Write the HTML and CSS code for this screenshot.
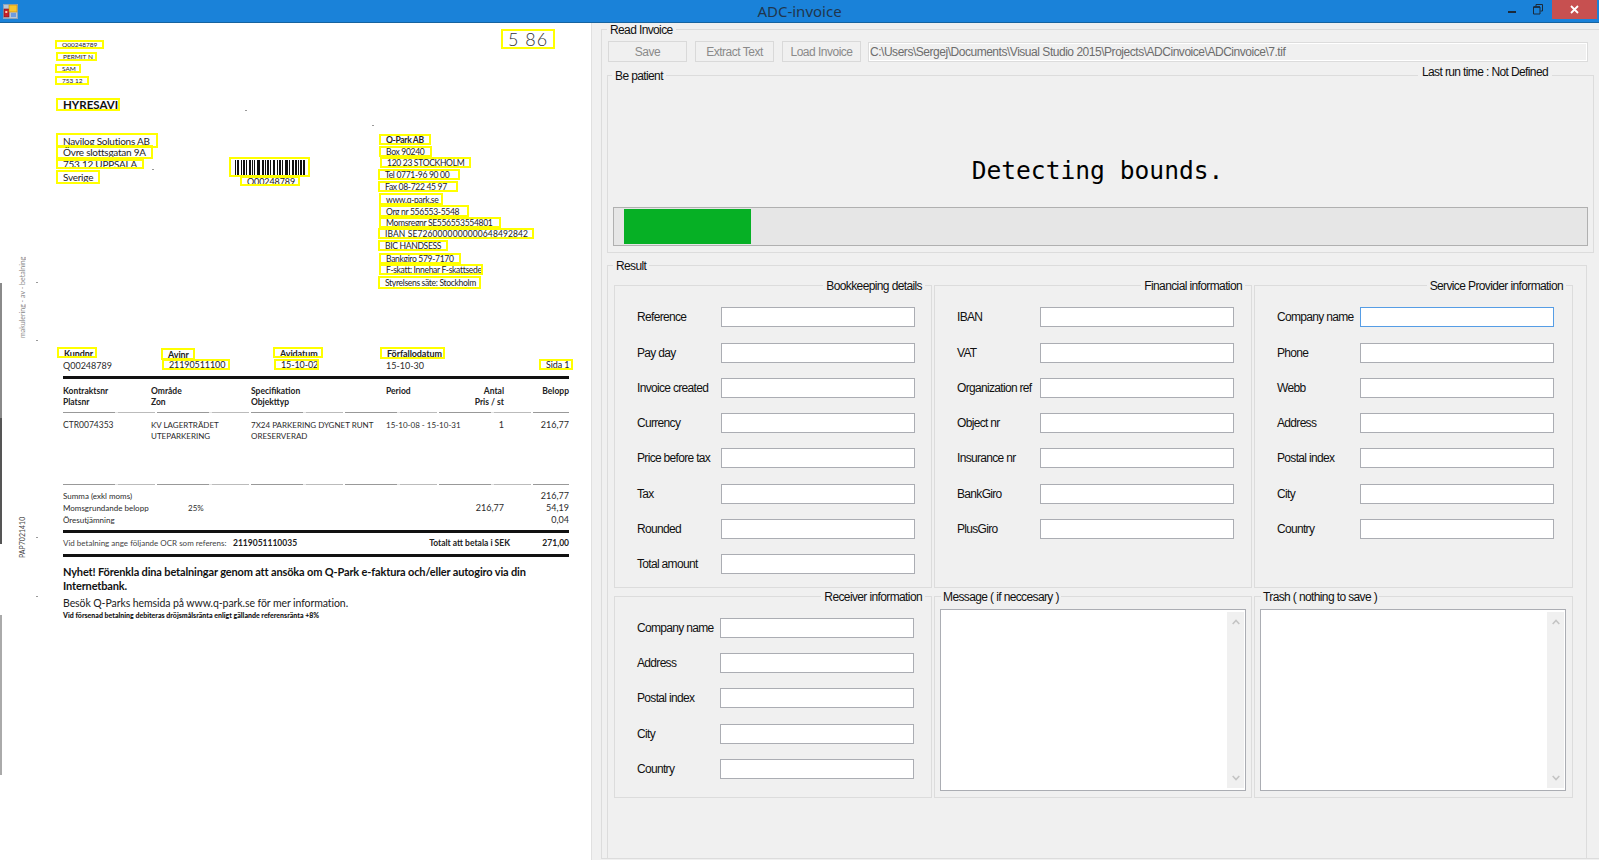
FILE: index.html
```html
<!DOCTYPE html>
<html lang="en">
<head>
<meta charset="utf-8">
<title>ADC-invoice</title>
<link rel="stylesheet" href="styles.css">
</head>
<body>
<div class="window">
  <header class="titlebar">
    <svg class="app-icon" width="15" height="15" viewBox="0 0 15 15">
      <rect x="0.5" y="0.5" width="14" height="14" fill="#b8c6d6" stroke="#8fa3b8"/>
      <rect x="1" y="5" width="5" height="8" fill="#c8202a" stroke="#7c1418" stroke-width="0.6"/>
      <rect x="2.3" y="7" width="2" height="2" fill="#f4d0b0"/>
      <rect x="6" y="1" width="8" height="7" fill="#f7c530" stroke="#c48a10" stroke-width="0.6"/>
      <rect x="8" y="9" width="5" height="4" fill="#6d9be0"/>
    </svg>
    <div class="title">ADC-invoice</div>
    <div class="win-buttons">
      <span class="btn-min"></span>
      <svg class="btn-restore" width="10" height="11" viewBox="0 0 10 11"><path d="M3 2.5V.5H9.5V7H7.5M.5 3H7V10H.5Z" fill="none" stroke="#1b2a3a" stroke-width="1"/><path d="M.5 3H7" stroke="#1b2a3a" stroke-width="1.6"/></svg>
      <div class="btn-close"><svg width="9" height="9" viewBox="0 0 9 9"><path d="M1 1L8 8M8 1L1 8" stroke="#fff" stroke-width="1.8"/></svg></div>
    </div>
  </header>

  <div class="main">
    <section class="doc">
      <span class="edge e1"></span><span class="edge e2"></span><span class="edge e3"></span>
      <span class="speck s1"></span><span class="speck s2"></span><span class="speck s3"></span><span class="speck s4"></span><span class="speck s5"></span><span class="speck s6"></span><span class="speck s7"></span>
      <span class="t margin m1">makulering - av - betalning</span>
      <span class="t margin m2">PAP7021410</span>

      <div class="box hand b-hand"><span>5 86</span></div>

      <div class="box tiny b1"><span>Q00248789</span></div>
      <div class="box tiny b2"><span>PERMIT N</span></div>
      <div class="box tiny b3"><span>SAM</span></div>
      <div class="box tiny b4"><span>753 12</span></div>
      <div class="box title-box b5"><span>HYRESAVI</span></div>
      <div class="box addr b6"><span>Navilog Solutions AB</span></div>
      <div class="box addr b7"><span>Övre slottsgatan 9A</span></div>
      <div class="box addr b8"><span>753 12 UPPSALA</span></div>
      <div class="box addr b9"><span>Sverige</span></div>

      <div class="box b-bar">
        <svg width="70" height="15" viewBox="0 0 70 15"><path fill="none" stroke="#111" stroke-width="1" d="M.5 0V15M2.5 0V15M3.5 0V15M6.5 0V15M8.5 0V15M9.5 0V15M11.5 0V15M14.5 0V15M15.5 0V15M17.5 0V15M19.5 0V15M22.5 0V15M23.5 0V15M24.5 0V15M27.5 0V15M28.5 0V15M30.5 0V15M32.5 0V15M33.5 0V15M35.5 0V15M38.5 0V15M39.5 0V15M42.5 0V15M44.5 0V15M45.5 0V15M47.5 0V15M50.5 0V15M51.5 0V15M52.5 0V15M54.5 0V15M57.5 0V15M58.5 0V15M60.5 0V15M61.5 0V15M63.5 0V15M65.5 0V15M66.5 0V15M68.5 0V15M69.5 0V15"/></svg>
      </div>
      <div class="box small b-barcode"><span>Q00248789</span></div>

      <div class="box small line bold c1"><span>Q-Park AB</span></div>
      <div class="box small line c2"><span>Box 90240</span></div>
      <div class="box small line c3"><span>120 23 STOCKHOLM</span></div>
      <div class="box small line c4"><span>Tel 0771-96 90 00</span></div>
      <div class="box small line c5"><span>Fax 08-722 45 97</span></div>
      <div class="box small line c6"><span>www.q-park.se</span></div>
      <div class="box small line c7"><span>Org nr 556553-5548</span></div>
      <div class="box small line c8"><span>Momsregnr SE556553554801</span></div>
      <div class="box small line c9"><span>IBAN SE7260000000000648492842</span></div>
      <div class="box small line c10"><span>BIC HANDSESS</span></div>
      <div class="box small line c11"><span>Bankgiro 579-7170</span></div>
      <div class="box small line c12"><span>F-skatt: Innehar F-skattsedel</span></div>
      <div class="box small line c13"><span>Styrelsens säte: Stockholm</span></div>

      <div class="box small bold low d1"><span>Kundnr</span></div>
      <div class="box small bold low d2"><span>Avinr</span></div>
      <div class="box small d3"><span>21190511100</span></div>
      <div class="box small bold low d4"><span>Avidatum</span></div>
      <div class="box small d5"><span>15-10-02</span></div>
      <div class="box small bold low d6"><span>Förfallodatum</span></div>
      <div class="box small d7"><span>Sida 1</span></div>

      <span class="t num x63 y366">Q00248789</span>
      <span class="t num x386 y366">15-10-30</span>
      <span class="rule thick r377"></span>

      <span class="t strong x63 y391">Kontraktsnr</span>
      <span class="t strong x63 y402">Platsnr</span>
      <span class="t strong x151 y391">Område</span>
      <span class="t strong x151 y402">Zon</span>
      <span class="t strong x251 y391">Specifikation</span>
      <span class="t strong x251 y402">Objekttyp</span>
      <span class="t strong x386 y391">Period</span>
      <span class="t strong rq y391">Antal</span>
      <span class="t strong rq y402">Pris / st</span>
      <span class="t strong ra y391">Belopp</span>
      <span class="rule thin r412"></span>

      <span class="t x63 y425">CTR0074353</span>
      <span class="t nar x151 y425">KV LAGERTRÄDET</span>
      <span class="t nar x151 y436">UTEPARKERING</span>
      <span class="t nar x251 y425">7X24 PARKERING DYGNET RUNT</span>
      <span class="t nar x251 y436">ORESERVERAD</span>
      <span class="t nar x386 y425">15-10-08 - 15-10-31</span>
      <span class="t num rq y425">1</span>
      <span class="t num ra y425">216,77</span>
      <span class="rule thin r484"></span>

      <span class="t nar x63 y496">Summa (exkl moms)</span>
      <span class="t num ra y496">216,77</span>
      <span class="t nar x63 y508">Momsgrundande belopp</span>
      <span class="t nar x188 y508">25%</span>
      <span class="t num rq y508">216,77</span>
      <span class="t num ra y508">54,19</span>
      <span class="t nar x63 y520">Öresutjämning</span>
      <span class="t num ra y520">0,04</span>
      <span class="rule thick r531"></span>

      <span class="t fine x63 y543">Vid betalning ange följande OCR som referens:</span>
      <span class="t strong x233 y543">2119051110035</span>
      <span class="t strong rt y543">Totalt att betala i SEK</span>
      <span class="t strong ra y543">271,00</span>
      <span class="rule thick r555"></span>

      <span class="t news x63 y572">Nyhet! Förenkla dina betalningar genom att ansöka om Q-Park e-faktura och/eller autogiro via din</span>
      <span class="t news x63 y586">Internetbank.</span>
      <span class="t visit x63 y603">Besök Q-Parks hemsida på www.q-park.se för mer information.</span>
      <span class="t late x63 y615">Vid försenad betalning debiteras dröjsmålsränta enligt gällande referensränta +8%</span>
    </section>

    <section class="panel">
      <div class="group read">
        <div class="head"><span>Read Invoice</span></div>
        <div class="toolbar">
          <button class="cmd" disabled>Save</button>
          <button class="cmd" disabled>Extract Text</button>
          <button class="cmd" disabled>Load Invoice</button>
          <input class="path" readonly value="C:\Users\Sergej\Documents\Visual Studio 2015\Projects\ADCinvoice\ADCinvoice\7.tif">
        </div>

        <div class="group patient">
          <div class="head split"><span>Be patient</span><span class="runtime">Last run time : Not Defined</span></div>
          <div class="status">Detecting bounds.</div>
          <div class="progress"><div class="bar"></div></div>
        </div>

        <div class="group result">
          <div class="head"><span>Result</span></div>
          <div class="cols top">
            <div class="group sub">
              <div class="head end"><span>Bookkeeping details</span></div>
              <div class="rows wide">
                <label class="row"><span class="lbl">Reference</span><input></label>
                <label class="row"><span class="lbl">Pay day</span><input></label>
                <label class="row"><span class="lbl">Invoice created</span><input></label>
                <label class="row"><span class="lbl">Currency</span><input></label>
                <label class="row"><span class="lbl">Price before tax</span><input></label>
                <label class="row"><span class="lbl">Tax</span><input></label>
                <label class="row"><span class="lbl">Rounded</span><input></label>
                <label class="row"><span class="lbl">Total amount</span><input></label>
              </div>
            </div>
            <div class="group sub">
              <div class="head end"><span>Financial information</span></div>
              <div class="rows">
                <label class="row"><span class="lbl">IBAN</span><input></label>
                <label class="row"><span class="lbl">VAT</span><input></label>
                <label class="row"><span class="lbl">Organization ref</span><input></label>
                <label class="row"><span class="lbl">Object nr</span><input></label>
                <label class="row"><span class="lbl">Insurance nr</span><input></label>
                <label class="row"><span class="lbl">BankGiro</span><input></label>
                <label class="row"><span class="lbl">PlusGiro</span><input></label>
              </div>
            </div>
            <div class="group sub">
              <div class="head end"><span>Service Provider information</span></div>
              <div class="rows">
                <label class="row"><span class="lbl">Company name</span><input class="focused"></label>
                <label class="row"><span class="lbl">Phone</span><input></label>
                <label class="row"><span class="lbl">Webb</span><input></label>
                <label class="row"><span class="lbl">Address</span><input></label>
                <label class="row"><span class="lbl">Postal index</span><input></label>
                <label class="row"><span class="lbl">City</span><input></label>
                <label class="row"><span class="lbl">Country</span><input></label>
              </div>
            </div>
          </div>
          <div class="cols bottom">
            <div class="group sub">
              <div class="head end"><span>Receiver information</span></div>
              <div class="rows tight">
                <label class="row"><span class="lbl">Company name</span><input></label>
                <label class="row"><span class="lbl">Address</span><input></label>
                <label class="row"><span class="lbl">Postal index</span><input></label>
                <label class="row"><span class="lbl">City</span><input></label>
                <label class="row"><span class="lbl">Country</span><input></label>
              </div>
            </div>
            <div class="group sub">
              <div class="head start"><span>Message ( if neccesary )</span></div>
              <div class="memo">
                <div class="memo-text"></div>
                <div class="scroll">
                  <svg width="8" height="6" viewBox="0 0 8 6"><path d="M.7 5L4 1.5 7.3 5" fill="none" stroke="#c4c4c4" stroke-width="1.6"/></svg>
                  <svg width="8" height="6" viewBox="0 0 8 6"><path d="M.7 1L4 4.5 7.3 1" fill="none" stroke="#c4c4c4" stroke-width="1.6"/></svg>
                </div>
              </div>
            </div>
            <div class="group sub">
              <div class="head start"><span>Trash ( nothing to save )</span></div>
              <div class="memo">
                <div class="memo-text"></div>
                <div class="scroll">
                  <svg width="8" height="6" viewBox="0 0 8 6"><path d="M.7 5L4 1.5 7.3 5" fill="none" stroke="#c4c4c4" stroke-width="1.6"/></svg>
                  <svg width="8" height="6" viewBox="0 0 8 6"><path d="M.7 1L4 4.5 7.3 1" fill="none" stroke="#c4c4c4" stroke-width="1.6"/></svg>
                </div>
              </div>
            </div>
          </div>
        </div>
      </div>
    </section>
  </div>
</div>
</body>
</html>
```

FILE: styles.css
```css
* { box-sizing: border-box; }
html, body { margin: 0; padding: 0; }
body { font-family: "Liberation Sans", Arial, sans-serif; font-size: 12px; letter-spacing: -0.5px; color: #111; background: #f0f0f0; }

.window { position: relative; width: 1599px; height: 860px; overflow: hidden; display: flex; flex-direction: column; }

/* Title bar */
.titlebar { flex: none; height: 23px; background: #1a82d9; border-bottom: 1px solid #16639f; display: grid; grid-template-columns: 1fr auto 1fr; align-items: start; }
.app-icon { margin: 4px 0 0 3px; }
.title { font-family: "Noto Sans", sans-serif; font-size: 15px; line-height: 22px; letter-spacing: 0; color: #20364d; }
.win-buttons { display: flex; justify-content: flex-end; align-items: flex-start; padding-right: 2px; }
.btn-min { width: 8px; height: 2px; margin: 11px 17px 0 0; background: #1b2a3a; }
.btn-restore { margin: 4px 9px 0 0; }
.btn-close { width: 45px; height: 19px; background: #c75050; display: flex; align-items: center; justify-content: center; }

.main { flex: 1; display: flex; min-height: 0; }

/* Scanned invoice canvas: coordinates relative to .window */
.doc { flex: none; width: 591px; background: #fff; }
.t { position: absolute; white-space: nowrap; font-family: Lato, sans-serif; font-size: 8.5px; line-height: 12px; letter-spacing: 0; color: #2b2b2b; }
.box { position: absolute; border: 2px solid #ffff00; overflow: hidden; white-space: nowrap; font-family: Lato, sans-serif; letter-spacing: 0; color: #222; display: flex; align-items: center; }
.box.tiny { font-size: 6.5px; line-height: 5px; padding-left: 5px; }
.box.title-box { font-size: 11.5px; line-height: 9px; font-weight: 700; padding-left: 5px; color: #111; }
.box.addr { font-size: 10px; line-height: 10px; letter-spacing: -0.25px; padding-left: 5px; }
.box.small { font-size: 9px; line-height: 9px; letter-spacing: -0.1px; padding-left: 5px; }
.box.line { font-size: 8.6px; letter-spacing: -0.35px; padding-top: 2px; }
.box.bold { font-weight: 700; }
.box.low { align-items: flex-start; padding-top: 0; }
.box.hand { font-weight: 300; font-size: 18px; line-height: 16px; letter-spacing: 1px; padding: 0; justify-content: center; color: #333; }
.box.c9 { font-size: 8.5px; letter-spacing: 0.1px; }

.b-hand { left: 501px; top: 29px; width: 54px; height: 20px; }
.b1 { left: 55px; top: 40px; width: 49px; height: 9px; }
.b2 { left: 56px; top: 52px; width: 41px; height: 9px; }
.b3 { left: 55px; top: 64px; width: 26px; height: 9px; }
.b4 { left: 55px; top: 76px; width: 34px; height: 9px; }
.b5 { left: 56px; top: 98px; width: 64px; height: 13px; }
.b6 { left: 56px; top: 133px; width: 102px; height: 15px; }
.b7 { left: 56px; top: 145px; width: 97px; height: 14px; }
.b8 { left: 56px; top: 159px; width: 88px; height: 10px; }
.b9 { left: 56px; top: 170px; width: 44px; height: 14px; }
.b-bar { left: 229px; top: 157px; width: 81px; height: 20px; justify-content: center; }
.b-barcode { left: 240px; top: 176px; width: 60px; height: 10px; }
.c1 { left: 379px; top: 134px; width: 52px; height: 11px; }
.c2 { left: 379px; top: 146px; width: 53px; height: 11px; }
.c3 { left: 380px; top: 157px; width: 91px; height: 11px; }
.c4 { left: 378px; top: 169px; width: 82px; height: 11px; }
.c5 { left: 378px; top: 181px; width: 80px; height: 11px; }
.c6 { left: 379px; top: 193px; width: 64px; height: 12px; }
.c7 { left: 379px; top: 205px; width: 90px; height: 12px; }
.c8 { left: 379px; top: 217px; width: 122px; height: 11px; }
.c9 { left: 378px; top: 228px; width: 156px; height: 11px; }
.c10 { left: 378px; top: 240px; width: 70px; height: 11px; }
.c11 { left: 379px; top: 253px; width: 82px; height: 11px; }
.c12 { left: 379px; top: 264px; width: 104px; height: 11px; }
.c13 { left: 378px; top: 276px; width: 103px; height: 13px; }
.d1 { left: 57px; top: 347px; width: 40px; height: 11px; }
.d2 { left: 161px; top: 348px; width: 34px; height: 12px; }
.d3 { left: 162px; top: 359px; width: 68px; height: 11px; }
.d4 { left: 273px; top: 347px; width: 50px; height: 11px; }
.d5 { left: 274px; top: 359px; width: 45px; height: 11px; }
.d6 { left: 380px; top: 347px; width: 65px; height: 12px; }
.d7 { left: 539px; top: 359px; width: 34px; height: 11px; }

.x63 { left: 63px; } .x151 { left: 151px; } .x188 { left: 188px; } .x233 { left: 233px; } .x251 { left: 251px; } .x386 { left: 386px; }
.rq { right: 1095px; } .ra { right: 1030px; } .rt { right: 1089px; }
.y366 { top: 360px; } .y391 { top: 385px; } .y402 { top: 396px; } .y425 { top: 419px; } .y436 { top: 430px; }
.y496 { top: 490px; } .y508 { top: 502px; } .y520 { top: 514px; } .y543 { top: 537px; }
.y572 { top: 566px; } .y586 { top: 580px; } .y603 { top: 597px; } .y615 { top: 609px; }
.num { font-size: 9px; }
.nar { font-size: 8px; }
.strong { font-weight: 700; font-size: 8.5px; color: #222; }
.fine { font-size: 8px; color: #444; }
.news { font-size: 11px; letter-spacing: -0.15px; font-weight: 700; color: #111; }
.visit { font-size: 10.5px; letter-spacing: -0.08px; color: #222; }
.late { font-size: 7px; font-weight: 900; color: #111; }

.rule { position: absolute; left: 63px; width: 506px; }
.rule.thick { height: 3px; background: #111; }
.rule.thin { height: 1px; background: repeating-linear-gradient(90deg, #999 0 52px, #e4e4e4 52px 55px, #bbb 55px 92px, #fff 92px 94px); }
.r377 { top: 376px; } .r412 { top: 412px; } .r484 { top: 484px; } .r531 { top: 530px; } .r555 { top: 554px; }

.edge { position: absolute; left: 0; width: 2px; background: #8a8a8a; }
.e1 { top: 283px; height: 135px; }
.e2 { top: 418px; height: 126px; background: #555; }
.e3 { top: 615px; height: 160px; background: #aaa; }
.speck { position: absolute; width: 2px; height: 1px; background: #999; }
.s1 { left: 245px; top: 110px; } .s2 { left: 372px; top: 125px; } .s3 { left: 152px; top: 169px; }
.s4 { left: 36px; top: 282px; } .s5 { left: 36px; top: 340px; } .s6 { left: 36px; top: 537px; } .s7 { left: 36px; top: 596px; }
.margin { writing-mode: vertical-rl; transform: rotate(180deg); font-size: 7px; line-height: 8px; left: 18px; color: #444; }
.m1 { top: 258px; height: 80px; color: #888; }
.m2 { top: 517px; height: 41px; }

/* Form panel */
.panel { flex: 1; min-width: 0; background: #f0f0f0; border-left: 1px solid #e0e0e0; padding: 6px 0 0 9px; }
.group { border: 1px solid #dcdcdc; }
.head { height: 14px; margin-top: -7px; line-height: 14px; letter-spacing: -0.62px; display: flex; padding-left: 5px; white-space: nowrap; }
.head span { background: #f0f0f0; padding: 0 3px; }
.head.split { justify-content: space-between; padding-right: 41px; padding-left: 4px; }
.head.end { justify-content: flex-end; padding-right: 6px; }
.head.start { padding-left: 6px; }
.head.start span { padding: 0 2px; }
.head .runtime { margin-top: -4px; height: 14px; padding: 0 4px; }

.read { width: 999px; height: 830px; }
.toolbar { display: flex; align-items: center; height: 21px; margin: 4px 11px 0 6px; }
.cmd { width: 79px; height: 21px; margin: 0 8px 0 0; padding: 0; background: #f0f0f0; border: 1px solid #d9d9d9; font: inherit; letter-spacing: inherit; color: #8a8a8a; }
.cmd:nth-of-type(3) { margin-right: 7px; }
.path { flex: 1; min-width: 0; height: 20px; padding: 0 1px; background: #f0f0f0; border: 1px solid #dcdcdc; box-shadow: inset 0 0 0 1px #fff; outline: none; font: inherit; letter-spacing: -0.47px; color: #6d6d6d; }

.patient { width: 987px; height: 178px; margin: 13px 0 0 5px; }
.status { margin-top: 73px; height: 30px; line-height: 30px; text-align: center; padding-right: 6px; font-family: "DejaVu Sans Mono", monospace; font-size: 24.6px; letter-spacing: 0; color: #000; }
.progress { width: 975px; height: 39px; margin: 21px 0 0 5px; padding: 1px 0 1px 10px; background: #e6e6e6; border: 1px solid #b0b0b0; }
.bar { width: 127px; height: 100%; background: #06b025; }

.result { width: 980px; height: 594px; margin: 12px 0 0 5px; }
.cols { display: grid; grid-template-columns: 318px 318px 319px; gap: 2px; margin-left: 6px; }
.cols.top { height: 303px; margin-top: 12px; }
.cols.bottom { height: 202px; margin-top: 8px; }
.rows { display: flex; flex-direction: column; row-gap: 15.25px; margin-top: 14.3px; padding-left: 22px; }
.rows.tight { row-gap: 15.2px; margin-top: 14px; }
.row { display: flex; align-items: center; height: 20px; }
.lbl { flex: none; width: 83px; white-space: nowrap; letter-spacing: -0.68px; }
.wide .lbl { width: 84px; }
.row input { width: 194px; height: 20px; padding: 0 2px; background: #fff; border: 1px solid #abadb3; outline: none; }
.row input.focused { border-color: #569de5; }

.memo { display: flex; width: 306px; height: 182px; margin: 5px 0 0 5px; padding: 2px 1px 2px 2px; background: #fff; border: 1px solid #abadb3; }
.memo-text { flex: 1; }
.scroll { flex: none; width: 17px; background: #f0f0f0; display: flex; flex-direction: column; justify-content: space-between; align-items: center; padding: 7px 0; }
```
